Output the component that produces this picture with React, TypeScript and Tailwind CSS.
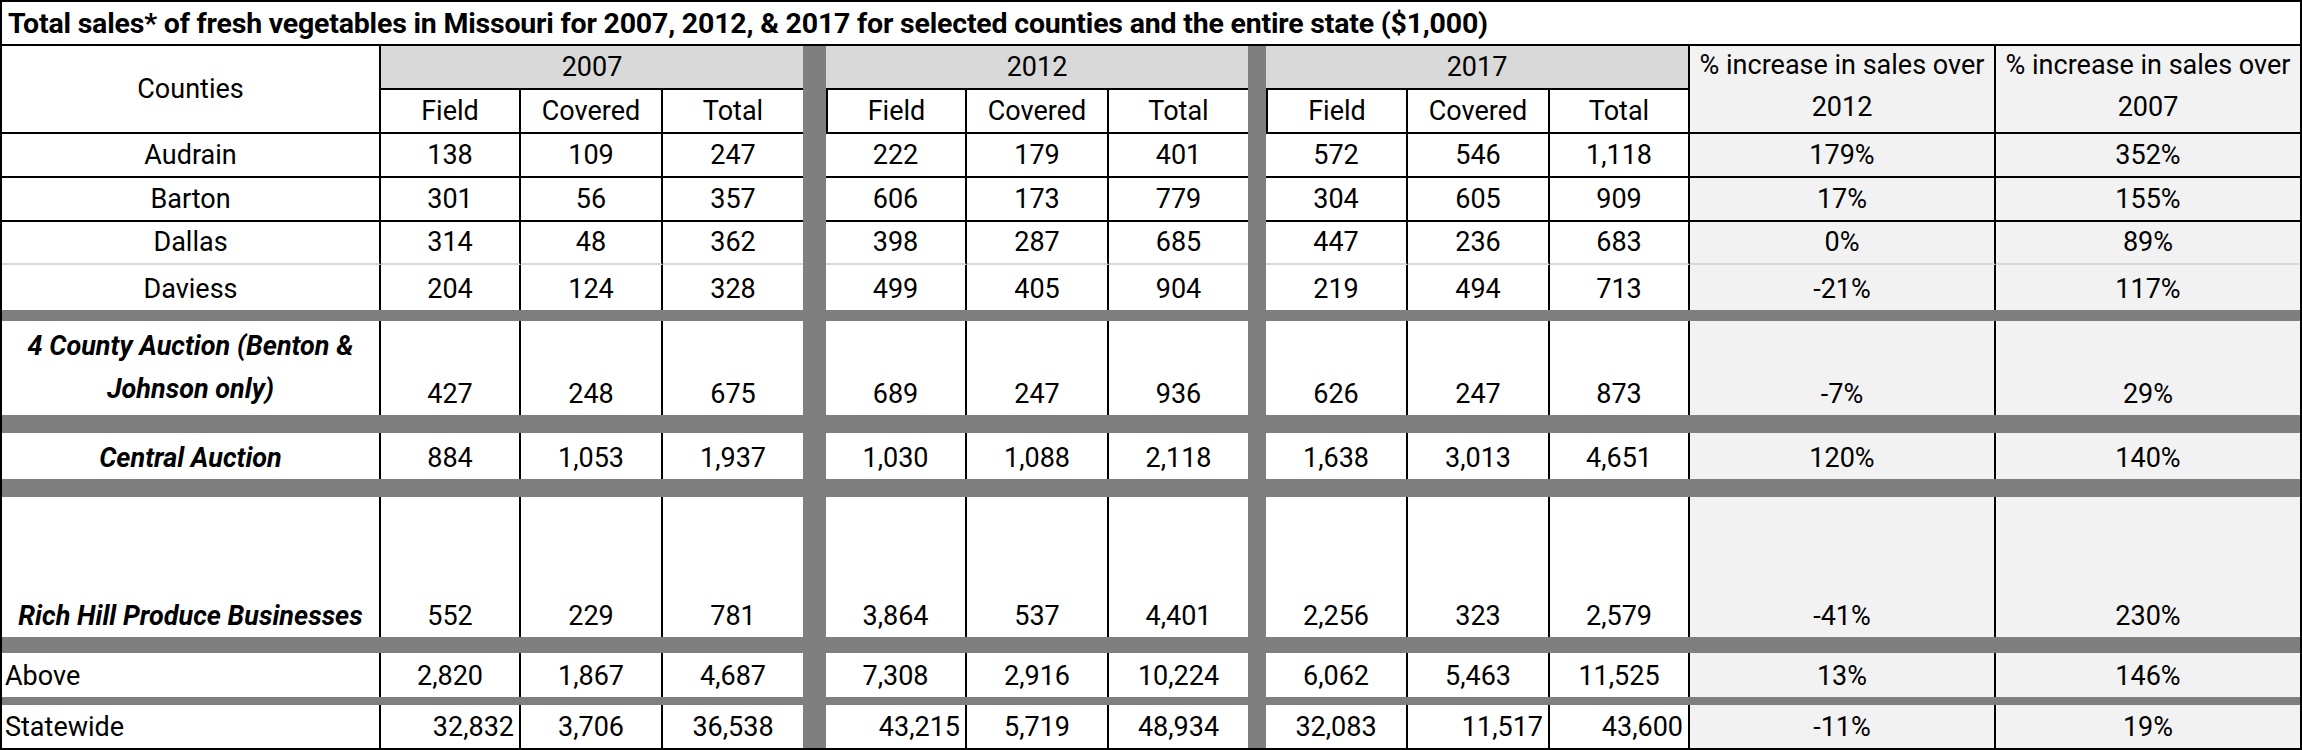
import clsx from "clsx";

type Row = {
  label: string;
  labelStyle?: "italic" | "left";
  height: string;
  bottom: string;
  values: string[];
  right?: number[];
};

const rows: Row[] = [
  { label: "Audrain", height: "h-[44px]", bottom: "border-b-2 border-black", values: ["138", "109", "247", "222", "179", "401", "572", "546", "1,118", "179%", "352%"] },
  { label: "Barton", height: "h-[44px]", bottom: "border-b-2 border-black", values: ["301", "56", "357", "606", "173", "779", "304", "605", "909", "17%", "155%"] },
  { label: "Dallas", height: "h-[43px]", bottom: "border-b-2 border-[#d9d9d9]", values: ["314", "48", "362", "398", "287", "685", "447", "236", "683", "0%", "89%"] },
  { label: "Daviess", height: "h-[45px]", bottom: "", values: ["204", "124", "328", "499", "405", "904", "219", "494", "713", "-21%", "117%"] },
];

const Sep = ({ h }: { h: string }) => <div className={clsx("col-span-full bg-[#7f7f7f]", h)} />;

const Cell = ({ children, className }: { children?: React.ReactNode; className?: string }) => (
  <div className={clsx("flex items-end justify-center pb-[4px] leading-[34px] whitespace-nowrap", className)}>{children}</div>
);

const DataRow = ({ row, label, labelClass }: { row: Row; label?: React.ReactNode; labelClass?: string }) => {
  const v = row.values;
  const b = row.bottom;
  const align = (i: number) => (row.right && row.right.includes(i) ? "justify-end pr-[5px]" : "");
  return (
    <>
      <Cell className={clsx(b, "border-r-2 border-r-black", labelClass)}>{label ?? row.label}</Cell>
      <Cell className={clsx(b, "border-r-2 border-r-black", align(0))}>{v[0]}</Cell>
      <Cell className={clsx(b, "border-r-2 border-r-black", align(1))}>{v[1]}</Cell>
      <Cell className={clsx(b, align(2))}>{v[2]}</Cell>
      <div className="bg-[#7f7f7f]" />
      <Cell className={clsx(b, "border-r-2 border-r-black", align(3))}>{v[3]}</Cell>
      <Cell className={clsx(b, "border-r-2 border-r-black", align(4))}>{v[4]}</Cell>
      <Cell className={clsx(b, align(5))}>{v[5]}</Cell>
      <div className="bg-[#7f7f7f]" />
      <Cell className={clsx(b, "border-r-2 border-r-black", align(6))}>{v[6]}</Cell>
      <Cell className={clsx(b, "border-r-2 border-r-black", align(7))}>{v[7]}</Cell>
      <Cell className={clsx(b, "border-r-2 border-r-black", align(8))}>{v[8]}</Cell>
      <Cell className={clsx(b, "border-r-2 border-r-black bg-[#f2f2f2]")}>{v[9]}</Cell>
      <Cell className={clsx(b, "bg-[#f2f2f2]")}>{v[10]}</Cell>
    </>
  );
};

export default function App() {
  const fourCounty: Row = { label: "", height: "", bottom: "", values: ["427", "248", "675", "689", "247", "936", "626", "247", "873", "-7%", "29%"] };
  const central: Row = { label: "Central Auction", height: "", bottom: "", values: ["884", "1,053", "1,937", "1,030", "1,088", "2,118", "1,638", "3,013", "4,651", "120%", "140%"] };
  const richHill: Row = { label: "Rich Hill Produce Businesses", height: "", bottom: "", values: ["552", "229", "781", "3,864", "537", "4,401", "2,256", "323", "2,579", "-41%", "230%"] };
  const above: Row = { label: "Above", height: "", bottom: "", values: ["2,820", "1,867", "4,687", "7,308", "2,916", "10,224", "6,062", "5,463", "11,525", "13%", "146%"] };
  const statewide: Row = { label: "Statewide", height: "", bottom: "", values: ["32,832", "3,706", "36,538", "43,215", "5,719", "48,934", "32,083", "11,517", "43,600", "-11%", "19%"], right: [0, 3, 7, 8] };

  return (
    <div className="w-[2302px] h-[750px] bg-white text-black text-[27px] font-['Roboto',_'Liberation_Sans',_sans-serif] border-2 border-black">
      <div className="grid grid-cols-[379px_140px_142px_140px_23px_141px_142px_139px_18px_142px_142px_140px_306px_304px] grid-rows-[44px_44px_44px_44px_44px_43px_45px_11px_94px_18px_46px_18px_140px_16px_44px_8px_43px]">
        <div className="col-span-full border-b-2 border-black flex items-end pl-[6px] pb-[3px] text-[28.5px] font-bold leading-[34px] whitespace-nowrap tracking-[-0.2px]">
          Total sales* of fresh vegetables in Missouri for 2007, 2012, &amp; 2017 for selected counties and the entire state ($1,000)
        </div>

        <div className="row-span-2 border-r-2 border-b-2 border-black flex items-center justify-center leading-[34px]">Counties</div>
        <Cell className="col-span-3 bg-[#d9d9d9] border-b-2 border-black">2007</Cell>
        <div className="row-span-2 bg-[#7f7f7f]" />
        <Cell className="col-span-3 bg-[#d9d9d9] border-b-2 border-black">2012</Cell>
        <div className="row-span-2 bg-[#7f7f7f]" />
        <Cell className="col-span-3 bg-[#d9d9d9] border-b-2 border-r-2 border-black">2017</Cell>
        <div className="row-span-2 bg-[#f2f2f2] border-r-2 border-b-2 border-black flex flex-col items-center justify-end pb-[4px] leading-[42px] whitespace-nowrap">
          <span>% increase in sales over</span>
          <span>2012</span>
        </div>
        <div className="row-span-2 bg-[#f2f2f2] border-b-2 border-black flex flex-col items-center justify-end pb-[4px] leading-[42px] whitespace-nowrap">
          <span>% increase in sales over</span>
          <span>2007</span>
        </div>

        <Cell className="border-r-2 border-b-2 border-black">Field</Cell>
        <Cell className="border-r-2 border-b-2 border-black">Covered</Cell>
        <Cell className="border-b-2 border-black">Total</Cell>
        <Cell className="border-l-2 border-r-2 border-b-2 border-black">Field</Cell>
        <Cell className="border-r-2 border-b-2 border-black">Covered</Cell>
        <Cell className="border-b-2 border-black">Total</Cell>
        <Cell className="border-l-2 border-r-2 border-b-2 border-black">Field</Cell>
        <Cell className="border-r-2 border-b-2 border-black">Covered</Cell>
        <Cell className="border-r-2 border-b-2 border-black">Total</Cell>

        {rows.map((r) => (
          <DataRow key={r.label} row={r} />
        ))}

        <Sep h="h-[11px]" />
        <DataRow
          row={fourCounty}
          labelClass="font-bold italic text-center leading-[43px]"
          label={
            <span className="flex flex-col items-center">
              <span>4 County Auction (Benton &amp;</span>
              <span>Johnson only)</span>
            </span>
          }
        />
        <Sep h="h-[18px]" />
        <DataRow row={central} labelClass="font-bold italic" />
        <Sep h="h-[18px]" />
        <DataRow row={richHill} labelClass="font-bold italic" />
        <Sep h="h-[16px]" />
        <DataRow row={above} labelClass="justify-start pl-[3px]" />
        <Sep h="h-[8px]" />
        <DataRow row={statewide} labelClass="justify-start pl-[3px]" />
      </div>
    </div>
  );
}
